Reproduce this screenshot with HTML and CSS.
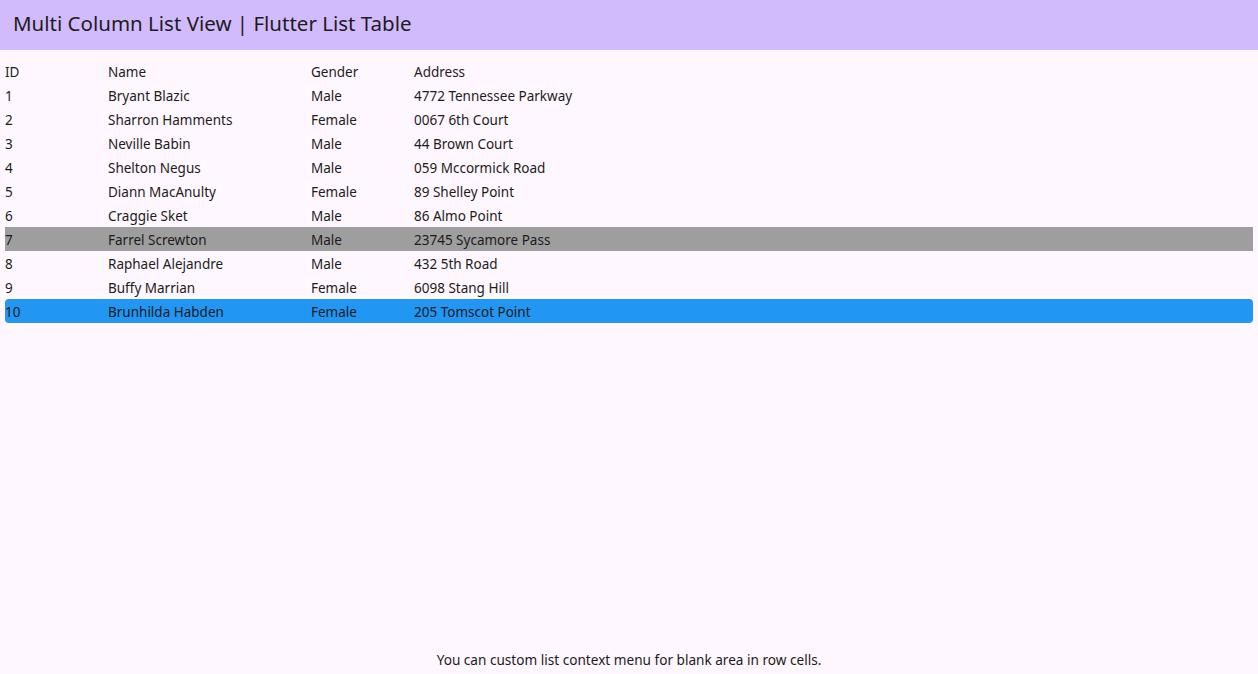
FILE: index.html
```html
<!DOCTYPE html>
<html>
<head>
<meta charset="utf-8">
<link rel="stylesheet" href="styles.css">
</head>
<body>
<header class="appbar">Multi Column List View | Flutter List Table</header>
<main class="content">
  <div class="list">
    <div class="row head"><span class="c-id">ID</span><span class="c-name">Name</span><span class="c-gender">Gender</span><span class="c-addr">Address</span></div>
    <div class="row"><span class="c-id">1</span><span class="c-name">Bryant Blazic</span><span class="c-gender">Male</span><span class="c-addr">4772 Tennessee Parkway</span></div>
    <div class="row"><span class="c-id">2</span><span class="c-name">Sharron Hamments</span><span class="c-gender">Female</span><span class="c-addr">0067 6th Court</span></div>
    <div class="row"><span class="c-id">3</span><span class="c-name">Neville Babin</span><span class="c-gender">Male</span><span class="c-addr">44 Brown Court</span></div>
    <div class="row"><span class="c-id">4</span><span class="c-name">Shelton Negus</span><span class="c-gender">Male</span><span class="c-addr">059 Mccormick Road</span></div>
    <div class="row"><span class="c-id">5</span><span class="c-name">Diann MacAnulty</span><span class="c-gender">Female</span><span class="c-addr">89 Shelley Point</span></div>
    <div class="row"><span class="c-id">6</span><span class="c-name">Craggie Sket</span><span class="c-gender">Male</span><span class="c-addr">86 Almo Point</span></div>
    <div class="row hover"><span class="c-id">7</span><span class="c-name">Farrel Screwton</span><span class="c-gender">Male</span><span class="c-addr">23745 Sycamore Pass</span></div>
    <div class="row"><span class="c-id">8</span><span class="c-name">Raphael Alejandre</span><span class="c-gender">Male</span><span class="c-addr">432 5th Road</span></div>
    <div class="row"><span class="c-id">9</span><span class="c-name">Buffy Marrian</span><span class="c-gender">Female</span><span class="c-addr">6098 Stang Hill</span></div>
    <div class="row selected"><span class="c-id">10</span><span class="c-name">Brunhilda Habden</span><span class="c-gender">Female</span><span class="c-addr">205 Tomscot Point</span></div>
  </div>
  <p class="note">You can custom list context menu for blank area in row cells.</p>
</main>
</body>
</html>
```

FILE: styles.css
```css
html, body {
  margin: 0;
  padding: 0;
  height: 100%;
}
body {
  background: #fef7ff;
  color: #1d1b20;
  font-family: "Noto Sans", "Open Sans", sans-serif;
  display: flex;
  flex-direction: column;
  overflow: hidden;
}
.appbar {
  box-sizing: border-box;
  height: 50px;
  background: #d2bbfc;
  font-size: 20.5px;
  line-height: 47px;
  padding-left: 13px;
  flex: none;
}
.content {
  flex: 1;
  display: flex;
  flex-direction: column;
  padding: 9px 5px 0 5px;
}
.list {
  flex: 1;
  display: flex;
  flex-direction: column;
}
.row {
  display: grid;
  grid-template-columns: 103px 203px 103px 1fr;
  box-sizing: border-box;
  height: 24px;
  padding-top: 2px;
  line-height: 22px;
  font-size: 13.5px;
  white-space: nowrap;
}
.row.hover {
  background: #9e9e9e;
}
.row.selected {
  background: #2196f3;
  border-radius: 4px;
}
.note {
  margin: 0;
  text-align: center;
  font-size: 13.6px;
  height: 28px;
  line-height: 27px;
}
```
